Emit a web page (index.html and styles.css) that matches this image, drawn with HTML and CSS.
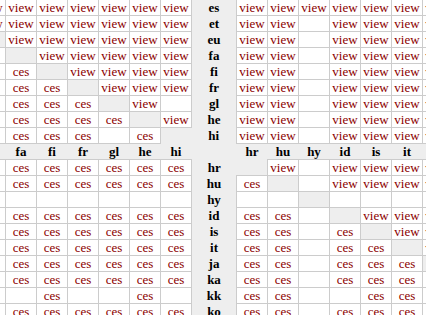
FILE: index.html
```html
<!DOCTYPE html>
<html lang="en">
<head>
<meta charset="utf-8">
<title>Translation matrix</title>
<link rel="stylesheet" href="styles.css">
</head>
<body>
<table class="matrix">
<tbody>
<tr><td class="cell"><a href="#">view</a></td><td class="cell"><a href="#">view</a></td><td class="cell"><a href="#">view</a></td><td class="cell"><a href="#">view</a></td><td class="cell"><a href="#">view</a></td><td class="cell"><a href="#">view</a></td><td class="cell"><a href="#">view</a></td><th class="label">es</th><td class="cell"><a href="#">view</a></td><td class="cell"><a href="#">view</a></td><td class="cell"><a href="#">view</a></td><td class="cell"><a href="#">view</a></td><td class="cell"><a href="#">view</a></td><td class="cell"><a href="#">view</a></td><td class="cell"><a href="#">view</a></td></tr>
<tr><td class="cell"><a href="#">view</a></td><td class="cell"><a href="#">view</a></td><td class="cell"><a href="#">view</a></td><td class="cell"><a href="#">view</a></td><td class="cell"><a href="#">view</a></td><td class="cell"><a href="#">view</a></td><td class="cell"><a href="#">view</a></td><th class="label">et</th><td class="cell"><a href="#">view</a></td><td class="cell"><a href="#">view</a></td><td class="cell"></td><td class="cell"><a href="#">view</a></td><td class="cell"><a href="#">view</a></td><td class="cell"><a href="#">view</a></td><td class="cell"><a href="#">view</a></td></tr>
<tr><td class="diag"></td><td class="cell"><a href="#">view</a></td><td class="cell"><a href="#">view</a></td><td class="cell"><a href="#">view</a></td><td class="cell"><a href="#">view</a></td><td class="cell"><a href="#">view</a></td><td class="cell"><a href="#">view</a></td><th class="label">eu</th><td class="cell"><a href="#">view</a></td><td class="cell"><a href="#">view</a></td><td class="cell"></td><td class="cell"><a href="#">view</a></td><td class="cell"><a href="#">view</a></td><td class="cell"><a href="#">view</a></td><td class="cell"><a href="#">view</a></td></tr>
<tr><td class="cell"></td><td class="diag"></td><td class="cell"><a href="#">view</a></td><td class="cell"><a href="#">view</a></td><td class="cell"><a href="#">view</a></td><td class="cell"><a href="#">view</a></td><td class="cell"><a href="#">view</a></td><th class="label">fa</th><td class="cell"><a href="#">view</a></td><td class="cell"><a href="#">view</a></td><td class="cell"></td><td class="cell"><a href="#">view</a></td><td class="cell"><a href="#">view</a></td><td class="cell"><a href="#">view</a></td><td class="cell"><a href="#">view</a></td></tr>
<tr><td class="cell"><a href="#">ces</a></td><td class="cell"><a href="#">ces</a></td><td class="diag"></td><td class="cell"><a href="#">view</a></td><td class="cell"><a href="#">view</a></td><td class="cell"><a href="#">view</a></td><td class="cell"><a href="#">view</a></td><th class="label">fi</th><td class="cell"><a href="#">view</a></td><td class="cell"><a href="#">view</a></td><td class="cell"></td><td class="cell"><a href="#">view</a></td><td class="cell"><a href="#">view</a></td><td class="cell"><a href="#">view</a></td><td class="cell"><a href="#">view</a></td></tr>
<tr><td class="cell"><a href="#">ces</a></td><td class="cell"><a href="#">ces</a></td><td class="cell"><a href="#">ces</a></td><td class="diag"></td><td class="cell"><a href="#">view</a></td><td class="cell"><a href="#">view</a></td><td class="cell"><a href="#">view</a></td><th class="label">fr</th><td class="cell"><a href="#">view</a></td><td class="cell"><a href="#">view</a></td><td class="cell"></td><td class="cell"><a href="#">view</a></td><td class="cell"><a href="#">view</a></td><td class="cell"><a href="#">view</a></td><td class="cell"><a href="#">view</a></td></tr>
<tr><td class="cell"><a href="#">ces</a></td><td class="cell"><a href="#">ces</a></td><td class="cell"><a href="#">ces</a></td><td class="cell"><a href="#">ces</a></td><td class="diag"></td><td class="cell"><a href="#">view</a></td><td class="cell"></td><th class="label">gl</th><td class="cell"><a href="#">view</a></td><td class="cell"><a href="#">view</a></td><td class="cell"></td><td class="cell"><a href="#">view</a></td><td class="cell"><a href="#">view</a></td><td class="cell"><a href="#">view</a></td><td class="cell"><a href="#">view</a></td></tr>
<tr><td class="cell"><a href="#">ces</a></td><td class="cell"><a href="#">ces</a></td><td class="cell"><a href="#">ces</a></td><td class="cell"><a href="#">ces</a></td><td class="cell"><a href="#">ces</a></td><td class="diag"></td><td class="cell"><a href="#">view</a></td><th class="label">he</th><td class="cell"><a href="#">view</a></td><td class="cell"><a href="#">view</a></td><td class="cell"></td><td class="cell"><a href="#">view</a></td><td class="cell"><a href="#">view</a></td><td class="cell"><a href="#">view</a></td><td class="cell"><a href="#">view</a></td></tr>
<tr><td class="cell"><a href="#">ces</a></td><td class="cell"><a href="#">ces</a></td><td class="cell"><a href="#">ces</a></td><td class="cell"><a href="#">ces</a></td><td class="cell"></td><td class="cell"><a href="#">ces</a></td><td class="diag"></td><th class="label">hi</th><td class="cell"><a href="#">view</a></td><td class="cell"><a href="#">view</a></td><td class="cell"></td><td class="cell"><a href="#">view</a></td><td class="cell"><a href="#">view</a></td><td class="cell"><a href="#">view</a></td><td class="cell"><a href="#">view</a></td></tr>
<tr class="head"><th>eu</th><th>fa</th><th>fi</th><th>fr</th><th>gl</th><th>he</th><th>hi</th><th class="label"></th><th>hr</th><th>hu</th><th>hy</th><th>id</th><th>is</th><th>it</th><th>ja</th></tr>
<tr><td class="cell"><a href="#">ces</a></td><td class="cell"><a href="#">ces</a></td><td class="cell"><a href="#">ces</a></td><td class="cell"><a href="#">ces</a></td><td class="cell"><a href="#">ces</a></td><td class="cell"><a href="#">ces</a></td><td class="cell"><a href="#">ces</a></td><th class="label">hr</th><td class="diag"></td><td class="cell"><a href="#">view</a></td><td class="cell"></td><td class="cell"><a href="#">view</a></td><td class="cell"><a href="#">view</a></td><td class="cell"><a href="#">view</a></td><td class="cell"><a href="#">view</a></td></tr>
<tr><td class="cell"><a href="#">ces</a></td><td class="cell"><a href="#">ces</a></td><td class="cell"><a href="#">ces</a></td><td class="cell"><a href="#">ces</a></td><td class="cell"><a href="#">ces</a></td><td class="cell"><a href="#">ces</a></td><td class="cell"><a href="#">ces</a></td><th class="label">hu</th><td class="cell"><a href="#">ces</a></td><td class="diag"></td><td class="cell"></td><td class="cell"><a href="#">view</a></td><td class="cell"><a href="#">view</a></td><td class="cell"><a href="#">view</a></td><td class="cell"><a href="#">view</a></td></tr>
<tr><td class="cell"></td><td class="cell"></td><td class="cell"></td><td class="cell"></td><td class="cell"></td><td class="cell"></td><td class="cell"></td><th class="label">hy</th><td class="cell"></td><td class="cell"></td><td class="diag"></td><td class="cell"></td><td class="cell"></td><td class="cell"></td><td class="cell"></td></tr>
<tr><td class="cell"><a href="#">ces</a></td><td class="cell"><a href="#">ces</a></td><td class="cell"><a href="#">ces</a></td><td class="cell"><a href="#">ces</a></td><td class="cell"><a href="#">ces</a></td><td class="cell"><a href="#">ces</a></td><td class="cell"><a href="#">ces</a></td><th class="label">id</th><td class="cell"><a href="#">ces</a></td><td class="cell"><a href="#">ces</a></td><td class="cell"></td><td class="diag"></td><td class="cell"><a href="#">view</a></td><td class="cell"><a href="#">view</a></td><td class="cell"><a href="#">view</a></td></tr>
<tr><td class="cell"><a href="#">ces</a></td><td class="cell"><a href="#">ces</a></td><td class="cell"><a href="#">ces</a></td><td class="cell"><a href="#">ces</a></td><td class="cell"><a href="#">ces</a></td><td class="cell"><a href="#">ces</a></td><td class="cell"><a href="#">ces</a></td><th class="label">is</th><td class="cell"><a href="#">ces</a></td><td class="cell"><a href="#">ces</a></td><td class="cell"></td><td class="cell"><a href="#">ces</a></td><td class="diag"></td><td class="cell"><a href="#">view</a></td><td class="cell"><a href="#">view</a></td></tr>
<tr><td class="cell"><a href="#">ces</a></td><td class="cell"><a href="#">ces</a></td><td class="cell"><a href="#">ces</a></td><td class="cell"><a href="#">ces</a></td><td class="cell"><a href="#">ces</a></td><td class="cell"><a href="#">ces</a></td><td class="cell"><a href="#">ces</a></td><th class="label">it</th><td class="cell"><a href="#">ces</a></td><td class="cell"><a href="#">ces</a></td><td class="cell"></td><td class="cell"><a href="#">ces</a></td><td class="cell"><a href="#">ces</a></td><td class="diag"></td><td class="cell"><a href="#">view</a></td></tr>
<tr><td class="cell"><a href="#">ces</a></td><td class="cell"><a href="#">ces</a></td><td class="cell"><a href="#">ces</a></td><td class="cell"><a href="#">ces</a></td><td class="cell"><a href="#">ces</a></td><td class="cell"><a href="#">ces</a></td><td class="cell"><a href="#">ces</a></td><th class="label">ja</th><td class="cell"><a href="#">ces</a></td><td class="cell"><a href="#">ces</a></td><td class="cell"></td><td class="cell"><a href="#">ces</a></td><td class="cell"><a href="#">ces</a></td><td class="cell"><a href="#">ces</a></td><td class="diag"></td></tr>
<tr><td class="cell"><a href="#">ces</a></td><td class="cell"><a href="#">ces</a></td><td class="cell"><a href="#">ces</a></td><td class="cell"><a href="#">ces</a></td><td class="cell"><a href="#">ces</a></td><td class="cell"><a href="#">ces</a></td><td class="cell"><a href="#">ces</a></td><th class="label">ka</th><td class="cell"><a href="#">ces</a></td><td class="cell"><a href="#">ces</a></td><td class="cell"></td><td class="cell"><a href="#">ces</a></td><td class="cell"><a href="#">ces</a></td><td class="cell"><a href="#">ces</a></td><td class="cell"><a href="#">ces</a></td></tr>
<tr><td class="cell"></td><td class="cell"></td><td class="cell"><a href="#">ces</a></td><td class="cell"></td><td class="cell"></td><td class="cell"><a href="#">ces</a></td><td class="cell"></td><th class="label">kk</th><td class="cell"><a href="#">ces</a></td><td class="cell"><a href="#">ces</a></td><td class="cell"></td><td class="cell"></td><td class="cell"><a href="#">ces</a></td><td class="cell"><a href="#">ces</a></td><td class="cell"><a href="#">ces</a></td></tr>
<tr><td class="cell"><a href="#">ces</a></td><td class="cell"><a href="#">ces</a></td><td class="cell"><a href="#">ces</a></td><td class="cell"><a href="#">ces</a></td><td class="cell"><a href="#">ces</a></td><td class="cell"><a href="#">ces</a></td><td class="cell"><a href="#">ces</a></td><th class="label">ko</th><td class="cell"><a href="#">ces</a></td><td class="cell"><a href="#">ces</a></td><td class="cell"></td><td class="cell"><a href="#">ces</a></td><td class="cell"><a href="#">ces</a></td><td class="cell"><a href="#">ces</a></td><td class="cell"><a href="#">ces</a></td></tr>
</tbody>
</table>
</body>
</html>
```

FILE: styles.css
```css
html, body {
  margin: 0;
  padding: 0;
  overflow: hidden;
  background: #eeeeee;
}

.matrix {
  border-collapse: collapse;
  table-layout: fixed;
  width: 480px;
  margin: -1px 0 0 -26px;
  font-family: "Liberation Serif", "Times New Roman", serif;
  font-size: 13px;
  line-height: 15px;
}

.matrix td,
.matrix th {
  padding: 0;
  height: 15px;
  text-align: center;
  white-space: nowrap;
  overflow: hidden;
  vertical-align: middle;
}

.cell {
  width: 30px;
  background: #ffffff;
  border: 1px solid #cccccc;
}

.cell a {
  color: #8b0000;
  text-decoration: none;
}

.diag {
  width: 30px;
  border: none;
  background: transparent;
}

.label {
  width: 44px;
  font-weight: bold;
  color: #000000;
  border: none;
}

.head th {
  font-weight: bold;
  color: #000000;
  border: none;
}
```
